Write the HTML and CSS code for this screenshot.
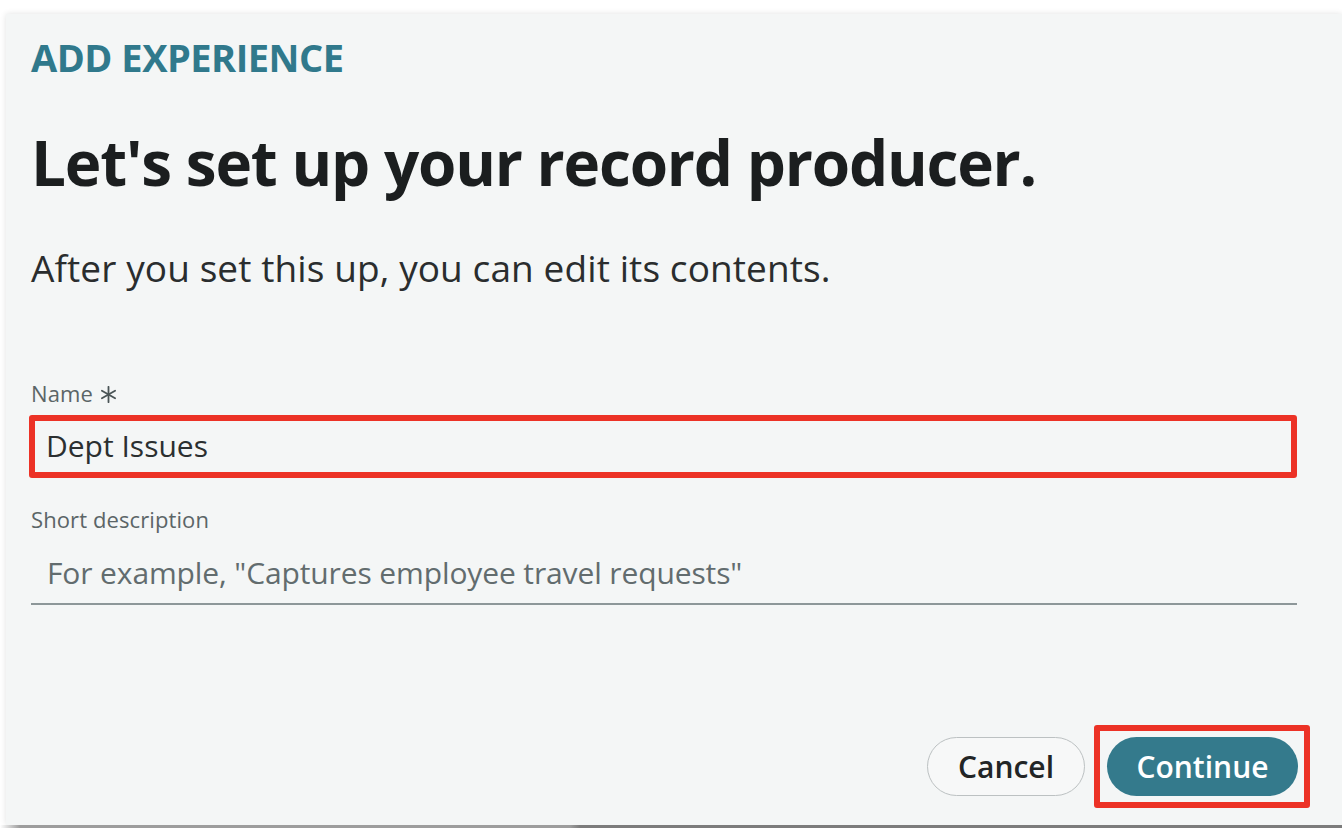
FILE: index.html
```html
<!DOCTYPE html>
<html lang="en">
<head>
<meta charset="utf-8">
<title>Add experience</title>
<link rel="stylesheet" href="styles.css">
</head>
<body>
<div class="dialog">
  <div class="eyebrow">ADD EXPERIENCE</div>
  <h1 class="title">Let's set up your record producer.</h1>
  <p class="subtitle">After you set this up, you can edit its contents.</p>

  <div class="field">
    <label class="label">Name
      <svg class="req" width="17" height="17" viewBox="0 0 16 16" aria-hidden="true">
        <g stroke="#4a5456" stroke-width="1.7" stroke-linecap="round">
          <line x1="8" y1="0.8" x2="8" y2="15.2"/>
          <line x1="1.8" y1="4.4" x2="14.2" y2="11.6"/>
          <line x1="1.8" y1="11.6" x2="14.2" y2="4.4"/>
        </g>
      </svg>
    </label>
    <div class="input highlighted">Dept Issues</div>
  </div>

  <div class="field second">
    <label class="label">Short description</label>
    <div class="textline">For example, "Captures employee travel requests"</div>
  </div>

  <div class="actions">
    <button class="btn btn-secondary">Cancel</button>
    <div class="highlight-box">
      <button class="btn btn-primary">Continue</button>
    </div>
  </div>
</div>
<div class="under-strip"></div>
</body>
</html>
```

FILE: styles.css
```css
html, body {
  margin: 0;
  padding: 0;
  background: #ffffff;
  font-family: "Open Sans", "Noto Sans", sans-serif;
}

.dialog {
  margin: 14px 0 0 6px;
  height: 811px;
  box-sizing: border-box;
  background: #f4f6f6;
  padding: 17px 45px 17px 25px;
  box-shadow: 0 0 6px rgba(0, 0, 0, 0.12);
  display: flex;
  flex-direction: column;
}

.eyebrow {
  font-size: 38px;
  line-height: 52px;
  font-weight: 700;
  color: #30798c;
  letter-spacing: -0.5px;
}

.title {
  margin: 37px 0 0 0;
  font-size: 62px;
  line-height: 84px;
  font-weight: 700;
  color: #1b1e1f;
  letter-spacing: -1.2px;
}

.subtitle {
  margin: 39px 0 0 0;
  font-size: 37px;
  line-height: 49px;
  font-weight: 400;
  color: #2a2d2e;
  letter-spacing: 0.1px;
}

.field {
  margin-top: 87px;
  display: flex;
  flex-direction: column;
}

.field.second {
  margin-top: 27px;
}

.label {
  display: flex;
  align-items: center;
  gap: 7px;
  font-size: 22px;
  line-height: 29px;
  color: #5b6567;
  letter-spacing: 0.1px;
}

.req {
  margin-top: 1px;
}

.input {
  margin-top: 7px;
  height: 63px;
  box-sizing: border-box;
  display: flex;
  align-items: center;
  padding: 0 12px 2px 11px;
  font-size: 30px;
  color: #2b2f30;
  margin-left: -2px;
}

.highlighted {
  border: 6px solid #ec3226;
  border-radius: 3px;
}

.textline {
  padding: 19px 0 10px 16px;
  font-size: 30px;
  line-height: 40px;
  color: #626c6e;
  letter-spacing: -0.12px;
  border-bottom: 2px solid #8d9799;
}

.actions {
  margin-top: auto;
  display: flex;
  justify-content: flex-end;
  align-items: center;
  gap: 9px;
  margin-right: -13px;
}

.btn {
  height: 59px;
  border-radius: 30px;
  font-family: "Open Sans", "Noto Sans", sans-serif;
  font-size: 30px;
  font-weight: 600;
  cursor: pointer;
  padding: 0;
  box-sizing: border-box;
}

.btn-secondary {
  width: 158px;
  background: #f7f8f8;
  border: 1px solid #bcc1c2;
  color: #222526;
}

.btn-primary {
  width: 191px;
  background: #347a8c;
  border: none;
  color: #ffffff;
}

.highlight-box {
  border: 6px solid #ec3226;
  border-radius: 3px;
  padding: 6px 6px 6px 7px;
}

.under-strip {
  height: 3px;
  background: linear-gradient(to right, #ffffff 0, #9d9d9d 20px, #9d9d9d 570px, #7c7c7c 580px, #7c7c7c 100%);
}
```
